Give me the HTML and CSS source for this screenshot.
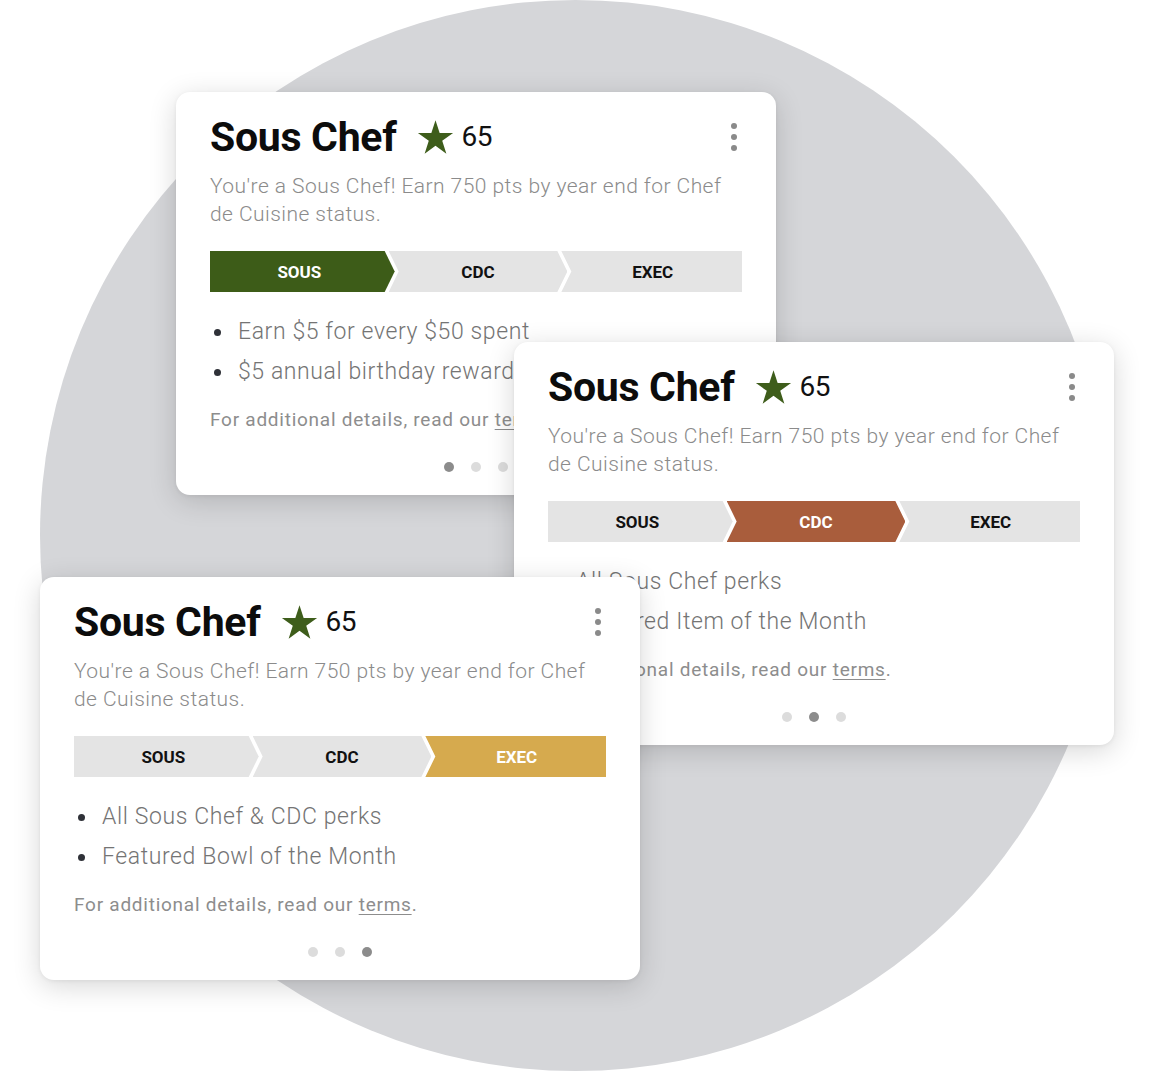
FILE: index.html
```html
<!DOCTYPE html>
<html lang="en">
<head>
<meta charset="utf-8">
<title>Sous Chef tiers</title>
<link rel="stylesheet" href="styles.css">
</head>
<body>
<div class="stage">
  <div class="circle"></div>

  <section class="card card-one">
    <div class="head">
      <h2 class="title">Sous Chef</h2>
      <svg class="star" viewBox="0 0 100 91" aria-hidden="true"><polygon points="50,0 61.23,34.55 97.55,34.55 68.17,55.9 79.39,90.45 50,69.1 20.61,90.45 31.83,55.9 2.45,34.55 38.77,34.55"/></svg>
      <span class="points">65</span>
      <span class="kebab"><i></i><i></i><i></i></span>
    </div>
    <p class="desc">You're a Sous Chef! Earn 750 pts by year end for Chef de Cuisine status.</p>
    <div class="tiers">
      <span class="tier first active-sous">SOUS</span>
      <span class="tier mid">CDC</span>
      <span class="tier last">EXEC</span>
    </div>
    <ul class="perks">
      <li>Earn $5 for every $50 spent</li>
      <li>$5 annual birthday reward</li>
    </ul>
    <p class="fine">For additional details, read our <a href="#">terms</a>.</p>
    <div class="dots"><i class="on"></i><i></i><i></i></div>
  </section>

  <section class="card card-two">
    <div class="head">
      <h2 class="title">Sous Chef</h2>
      <svg class="star" viewBox="0 0 100 91" aria-hidden="true"><polygon points="50,0 61.23,34.55 97.55,34.55 68.17,55.9 79.39,90.45 50,69.1 20.61,90.45 31.83,55.9 2.45,34.55 38.77,34.55"/></svg>
      <span class="points">65</span>
      <span class="kebab"><i></i><i></i><i></i></span>
    </div>
    <p class="desc">You're a Sous Chef! Earn 750 pts by year end for Chef de Cuisine status.</p>
    <div class="tiers">
      <span class="tier first">SOUS</span>
      <span class="tier mid active-cdc">CDC</span>
      <span class="tier last">EXEC</span>
    </div>
    <ul class="perks">
      <li>All Sous Chef perks</li>
      <li>Featured Item of the Month</li>
    </ul>
    <p class="fine">For additional details, read our <a href="#">terms</a>.</p>
    <div class="dots"><i></i><i class="on"></i><i></i></div>
  </section>

  <section class="card card-three">
    <div class="head">
      <h2 class="title">Sous Chef</h2>
      <svg class="star" viewBox="0 0 100 91" aria-hidden="true"><polygon points="50,0 61.23,34.55 97.55,34.55 68.17,55.9 79.39,90.45 50,69.1 20.61,90.45 31.83,55.9 2.45,34.55 38.77,34.55"/></svg>
      <span class="points">65</span>
      <span class="kebab"><i></i><i></i><i></i></span>
    </div>
    <p class="desc">You're a Sous Chef! Earn 750 pts by year end for Chef de Cuisine status.</p>
    <div class="tiers">
      <span class="tier first">SOUS</span>
      <span class="tier mid">CDC</span>
      <span class="tier last active-exec">EXEC</span>
    </div>
    <ul class="perks">
      <li>All Sous Chef &amp; CDC perks</li>
      <li>Featured Bowl of the Month</li>
    </ul>
    <p class="fine">For additional details, read our <a href="#">terms</a>.</p>
    <div class="dots"><i></i><i></i><i class="on"></i></div>
  </section>
</div>
</body>
</html>
```

FILE: styles.css
```css
* { box-sizing: border-box; }

html, body {
  margin: 0;
  padding: 0;
  background: #ffffff;
}

body {
  font-family: Roboto, "Liberation Sans", Arial, sans-serif;
  color: #111;
}

.stage {
  position: relative;
  width: 1153px;
  height: 1072px;
  overflow: hidden;
}

.circle {
  position: absolute;
  left: 40px;
  top: 0;
  width: 1071px;
  height: 1071px;
  border-radius: 50%;
  background: #d5d6d9;
}

.card {
  position: absolute;
  width: 600px;
  height: 403px;
  background: #fff;
  border-radius: 14px;
  padding: 22px 34px 0;
  box-shadow: 0 6px 28px rgba(0, 0, 0, 0.16), 0 1px 4px rgba(0, 0, 0, 0.06);
}

.card-one { left: 176px; top: 92px; z-index: 1; }
.card-two { left: 514px; top: 342px; z-index: 2; }
.card-three { left: 40px; top: 577px; z-index: 3; }

.head {
  display: flex;
  align-items: center;
  height: 46px;
}

.title {
  margin: 0;
  font-size: 41px;
  line-height: 46px;
  font-weight: 700;
  color: #0c0c0c;
  letter-spacing: -0.3px;
}

.star {
  width: 37px;
  height: 34px;
  margin-left: 20px;
  fill: #3e5d1b;
}

.points {
  margin-left: 8px;
  font-size: 28px;
  line-height: 46px;
  font-weight: 400;
  color: #111;
  letter-spacing: -0.5px;
}

.kebab {
  margin-left: auto;
  margin-right: 1px;
  width: 14px;
  display: flex;
  flex-direction: column;
  align-items: center;
  gap: 5px;
}

.kebab i {
  display: block;
  width: 6px;
  height: 6px;
  border-radius: 50%;
  background: #8a8a8a;
}

.desc {
  margin: 12px 0 0;
  font-size: 21px;
  line-height: 28px;
  font-weight: 300;
  letter-spacing: 0.45px;
  color: #8b8b8b;
}

.tiers {
  display: flex;
  height: 41px;
  margin-top: 23px;
}

.tier {
  flex: 1 1 0;
  display: flex;
  align-items: center;
  justify-content: center;
  background: #e4e4e4;
  font-size: 17px;
  font-weight: 700;
  color: #111;
}

.tier + .tier { margin-left: -6px; }

.tier.first {
  clip-path: polygon(0 0, calc(100% - 10px) 0, 100% 50%, calc(100% - 10px) 100%, 0 100%);
  padding-right: 6px;
}

.tier.mid {
  clip-path: polygon(0 0, calc(100% - 10px) 0, 100% 50%, calc(100% - 10px) 100%, 0 100%, 10px 50%);
}

.tier.last {
  clip-path: polygon(0 0, 100% 0, 100% 100%, 0 100%, 10px 50%);
  padding-left: 2px;
}

.active-sous { background: #3d5c18; color: #fff; }
.active-cdc { background: #a95d3c; color: #fff; }
.active-exec { background: #d6aa4e; color: #fff; }

.perks {
  list-style: none;
  margin: 20px 0 0;
  padding: 0;
}

.perks li {
  display: flex;
  align-items: center;
  font-size: 23px;
  line-height: 40px;
  font-weight: 300;
  letter-spacing: 0.6px;
  color: #747474;
}

.perks li::before {
  content: "";
  width: 7px;
  height: 7px;
  border-radius: 50%;
  background: #2f3138;
  margin-left: 4px;
  margin-right: 17px;
  flex: none;
}

.fine {
  margin: 15px 0 0;
  font-size: 19px;
  line-height: 26px;
  font-weight: 400;
  letter-spacing: 0.75px;
  color: #8d8d8d;
}

.fine a {
  color: #8d8d8d;
  text-decoration: underline;
  text-underline-offset: 3px;
}

.dots {
  display: flex;
  justify-content: center;
  gap: 17px;
  margin-top: 29px;
}

.dots i {
  display: block;
  width: 10px;
  height: 10px;
  border-radius: 50%;
  background: #dcdcdc;
}

.dots i.on { background: #8c8c8c; }
```
